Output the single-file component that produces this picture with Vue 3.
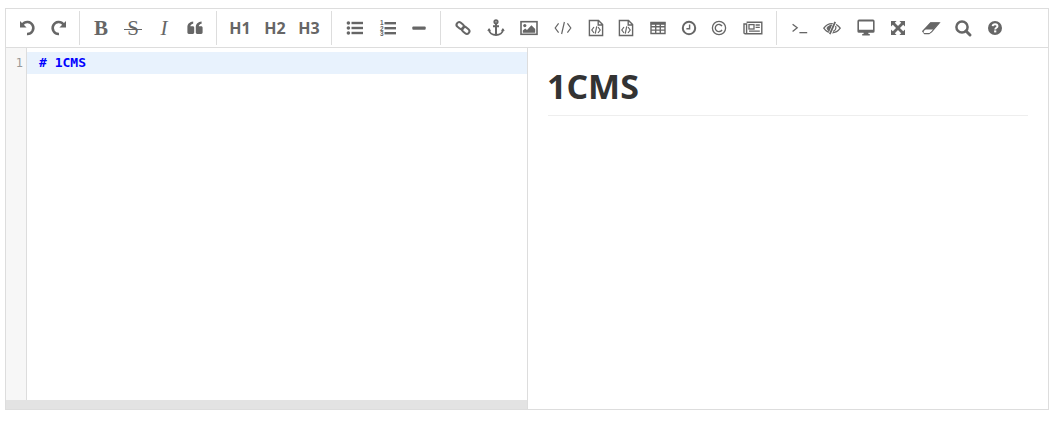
<script setup>
const S = 'fill="none" stroke="#666"'
const icons = {
  undo: `<path d="M5.4 6.6A6 6 0 1 1 10 16" ${S} stroke-width="2.5"/><path d="M3 3V9.6H9.6z" fill="#666"/>`,
  redo: `<path d="M14.6 6.6A6 6 0 1 0 10 16" ${S} stroke-width="2.5"/><path d="M17 3V9.6H10.4z" fill="#666"/>`,
  quote: `<path d="M2.4 9.2C2.4 6 4.6 3.9 8.2 3.5V5.8C6.4 6.1 5.5 7 5.4 8.3H7.8C8.6 8.3 9.2 8.9 9.2 9.7V14.6C9.2 15.4 8.6 16 7.8 16H3.8C3 16 2.4 15.4 2.4 14.6Z M10.8 9.2C10.8 6 13 3.9 16.6 3.5V5.8C14.8 6.1 13.9 7 13.8 8.3H16.2C17 8.3 17.6 8.9 17.6 9.7V14.6C17.6 15.4 17 16 16.2 16H12.2C11.4 16 10.8 15.4 10.8 14.6Z" fill="#666"/>`,
  ul: `<g fill="#666"><circle cx="3.4" cy="5" r="1.8"/><circle cx="3.4" cy="10" r="1.8"/><circle cx="3.4" cy="15" r="1.8"/><rect x="6.5" y="3.8" width="11.5" height="2.4"/><rect x="6.5" y="8.8" width="11.5" height="2.4"/><rect x="6.5" y="13.8" width="11.5" height="2.4"/></g>`,
  ol: `<g fill="#666"><rect x="6.5" y="4" width="11.5" height="2.4"/><rect x="6.5" y="9" width="11.5" height="2.4"/><rect x="6.5" y="14" width="11.5" height="2.4"/><text x="2" y="7" font-size="6.5" font-weight="700" font-family="Liberation Sans">1</text><text x="2" y="12.5" font-size="6.5" font-weight="700" font-family="Liberation Sans">2</text><text x="2" y="18" font-size="6.5" font-weight="700" font-family="Liberation Sans">3</text></g>`,
  hr: `<rect x="3.3" y="8.4" width="13.4" height="3.4" rx="1" fill="#666"/>`,
  link: `<g transform="rotate(40 10 10)" ${S} stroke-width="2"><rect x="2.4" y="7.4" width="8" height="5.2" rx="2.6"/><rect x="9.6" y="7.4" width="8" height="5.2" rx="2.6"/></g>`,
  anchor: `<g ${S} stroke-width="2"><circle cx="10" cy="3.8" r="1.6"/><path d="M10 5.5V17M7 8.2H13M3 11.5C3.2 15 6.5 17 10 17S16.8 15 17 11.5"/></g><path d="M1.2 12.8L3.1 10L5 12.8zM15 12.8L16.9 10L18.8 12.8z" fill="#666"/>`,
  image: `<rect x="2" y="3.7" width="16" height="12.6" ${S} stroke-width="1.6"/><circle cx="5.8" cy="7.6" r="1.6" fill="#666"/><path d="M3.8 14.8V12.6L6.2 10.4L8 12L12.4 7.2L16.2 11V14.8Z" fill="#666"/>`,
  code: `<path d="M5.6 5.4L2.2 10L5.6 14.6M14.4 5.4L17.8 10L14.4 14.6M11.4 4L8.6 16" ${S} stroke-width="1.2"/>`,
  file: `<path d="M3.4 2.5H12.5L16.6 6.6V17.5H3.4ZM12.2 2.5V7H16.6" ${S} stroke-width="1.4"/><path d="M8 9L5.8 12L8 15M12 9L14.2 12L12 15M10.7 8.4L9.3 15.6" ${S} stroke-width="1.2"/>`,
  table: `<path d="M2.6 4H17.4V6.8H2.6Z" fill="#666"/><path d="M3 4.5H17V15.5H3ZM3 8.7H17M3 12.1H17M7.7 6V15.5M12.3 6V15.5" ${S} stroke-width="1.4"/>`,
  clock: `<circle cx="10" cy="10" r="6.2" ${S} stroke-width="2"/><path d="M10.6 6.5V10.8H7.4" ${S} stroke-width="1.4"/>`,
  copy: `<circle cx="10" cy="10" r="6.6" ${S} stroke-width="1.3"/><path d="M13 8.2A3.6 3.6 0 1 0 13 11.8" ${S} stroke-width="1.4"/>`,
  news: `<path d="M3.6 4.2H18.8V15.8H2.2A1.1 1.1 0 0 1 1 14.8V6H3.6V15" ${S} stroke-width="1.4"/><rect x="6" y="6.6" width="5" height="4.4" ${S} stroke-width="1.3"/><path d="M12.6 7H16.8M12.6 9.4H16.8M6 13.2H16.8" ${S} stroke-width="1.3"/>`,
  term: `<path d="M2.6 6.2L7.2 9.8L2.6 13.4" ${S} stroke-width="1.3"/><rect x="9.4" y="14" width="7.8" height="1.3" fill="#666"/>`,
  eye: `<path d="M1.8 10.2C4 7 7 5.6 10 5.6S16 7 18.2 10.2C16 13.4 13 14.8 10 14.8S4 13.4 1.8 10.2Z" ${S} stroke-width="1.3"/><path d="M4.5 10C6 7.6 8 6.6 10.5 6.4L7.6 14C6 13 5 11.6 4.5 10Z" fill="#666"/><path d="M13.4 3.6L8 16.4" stroke="#fff" stroke-width="3.4"/><path d="M13.2 3.8L7.8 16.2" stroke="#666" stroke-width="1.8"/><path d="M13.6 8A4 4 0 0 1 11 13.4" ${S} stroke-width="1.2"/>`,
  desktop: `<path d="M3 1.6H17A1.6 1.6 0 0 1 18.6 3.2V13.2A1.6 1.6 0 0 1 17 14.8H12.4V16H13.8V17.4H6.2V16H7.6V14.8H3A1.6 1.6 0 0 1 1.4 13.2V3.2A1.6 1.6 0 0 1 3 1.6ZM3 3.4V11.8H17V3.4Z" fill="#666" fill-rule="evenodd"/>`,
  expand: `<g fill="#666"><path d="M3 3H8.6L6.8 4.8L15.2 13.2L17 11.4V17H11.4L13.2 15.2L4.8 6.8L3 8.6Z"/><path d="M17 3V8.6L15.2 6.8L6.8 15.2L8.6 17H3V11.4L4.8 13.2L13.2 4.8L11.4 3Z"/></g>`,
  eraser: `<path d="M1.8 13.2L9.6 5H18.2L10.6 13.8L8 15.6H3.6Z" ${S} stroke-width="1.3"/><path d="M9.6 4.6H18.6L12.2 11.6H3.8Z" fill="#666"/><path d="M4.2 12.2H11.4L8.4 15H3.2L2.4 14.2Z" fill="#fff"/>`,
  search: `<circle cx="9" cy="9" r="5.6" ${S} stroke-width="2.5"/><path d="M13 13L17 17" stroke="#666" stroke-width="3" stroke-linecap="round"/>`,
  help: `<circle cx="10" cy="10" r="7" fill="#666"/><path d="M7.6 8.2C7.8 6.9 8.9 6.2 10.1 6.2C11.5 6.2 12.5 7.1 12.5 8.2C12.5 9.8 10.2 9.8 10.2 11.5" fill="none" stroke="#fff" stroke-width="1.9"/><rect x="9.1" y="12.4" width="2.2" height="2" fill="#fff"/>`
}
const groups = [
  [{ w: 34, i: 'undo' }, { w: 30, i: 'redo' }],
  [{ w: 32, t: 'B', c: 'bold' }, { w: 32, t: 'S', c: 'strike' }, { w: 30, t: 'I', c: 'italic' }, { w: 32, i: 'quote' }],
  [{ w: 36, t: 'H1', c: 'head' }, { w: 34, t: 'H2', c: 'head' }, { w: 34, t: 'H3', c: 'head' }],
  [{ w: 36, i: 'ul' }, { w: 30, i: 'ol' }, { w: 32, i: 'hr' }],
  [{ w: 34, i: 'link' }, { w: 31, i: 'anchor' }, { w: 35, i: 'image' }, { w: 34, i: 'code' }, { w: 32, i: 'file' }, { w: 28, i: 'file' }, { w: 35, i: 'table' }, { w: 28, i: 'clock' }, { w: 32, i: 'copy' }, { w: 36, i: 'news' }],
  [{ w: 35, i: 'term' }, { w: 29, i: 'eye' }, { w: 39, i: 'desktop' }, { w: 26, i: 'expand' }, { w: 39, i: 'eraser' }, { w: 26, i: 'search' }, { w: 37, i: 'help' }]
]
</script>

<template>
  <div class="editor">
    <div class="toolbar">
      <template v-for="(group, g) in groups" :key="g">
        <span v-if="g" class="sep"></span>
        <div class="group">
          <span v-for="(b, n) in group" :key="n" class="btn" :style="{ width: b.w + 'px' }">
            <span v-if="b.t" :class="b.c">{{ b.t }}</span>
            <svg v-else width="20" height="20" viewBox="0 0 20 20" v-html="icons[b.i]"></svg>
          </span>
        </div>
      </template>
    </div>
    <div class="body">
      <div class="source">
        <div class="code-area">
          <div class="gutter"><span class="num">1</span></div>
          <div class="lines"><div class="active"># 1CMS</div></div>
        </div>
        <div class="scrollbar"></div>
      </div>
      <div class="preview"><h1>1CMS</h1></div>
    </div>
  </div>
</template>

<style>
html, body { background: #fff; }
</style>

<style scoped>
.editor {
  box-sizing: border-box;
  width: 1044px;
  height: 402px;
  margin: 8px 0 0 5px;
  border: 1px solid #ddd;
  display: flex;
  flex-direction: column;
  font-family: "Open Sans", sans-serif;
  color: #666;
}
.toolbar {
  box-sizing: border-box;
  height: 39px;
  flex: none;
  padding-left: 4px;
  border-bottom: 1px solid #ddd;
  display: flex;
  align-items: center;
}
.group { display: flex; align-items: center; }
.sep {
  width: 1px;
  height: 34px;
  margin: 0 5px;
  background: #ddd;
}
.btn {
  height: 24px;
  display: flex;
  align-items: center;
  justify-content: center;
  line-height: 1;
}
.btn svg { display: block; }
.bold, .strike, .italic { font-family: "Liberation Serif", serif; font-size: 21px; position: relative; }
.bold { font-weight: 700; }
.italic { font-style: italic; }
.strike::after {
  content: "";
  position: absolute;
  left: -3px;
  right: -3px;
  top: 11px;
  height: 1px;
  background: #666;
}
.head { font-size: 16px; font-weight: 700; }
.body { flex: 1; display: flex; min-height: 0; }
.source {
  box-sizing: border-box;
  width: 522px;
  flex: none;
  border-right: 1px solid #ddd;
  display: flex;
  flex-direction: column;
}
.code-area { flex: 1; display: flex; min-height: 0; }
.gutter {
  box-sizing: border-box;
  width: 21px;
  flex: none;
  background: #f7f7f7;
  border-right: 1px solid #ddd;
  padding-top: 4px;
  text-align: right;
}
.num {
  display: block;
  padding-right: 3px;
  font: 12px/22px "DejaVu Sans Mono", monospace;
  color: #999;
}
.lines { flex: 1; padding-top: 4px; min-width: 0; }
.active {
  height: 22px;
  padding-left: 12px;
  background: #e8f2fd;
  color: #00f;
  font: 700 13px/22px "DejaVu Sans Mono", monospace;
}
.scrollbar { height: 9px; flex: none; background: #e3e3e3; }
.preview { flex: 1; padding: 17px 20px 0; min-width: 0; }
h1 {
  margin: 0;
  padding-bottom: 8px;
  border-bottom: 1px solid #eee;
  font-size: 34px;
  line-height: 42px;
  font-weight: 700;
  color: #333;
  text-indent: -1px;
}
</style>
